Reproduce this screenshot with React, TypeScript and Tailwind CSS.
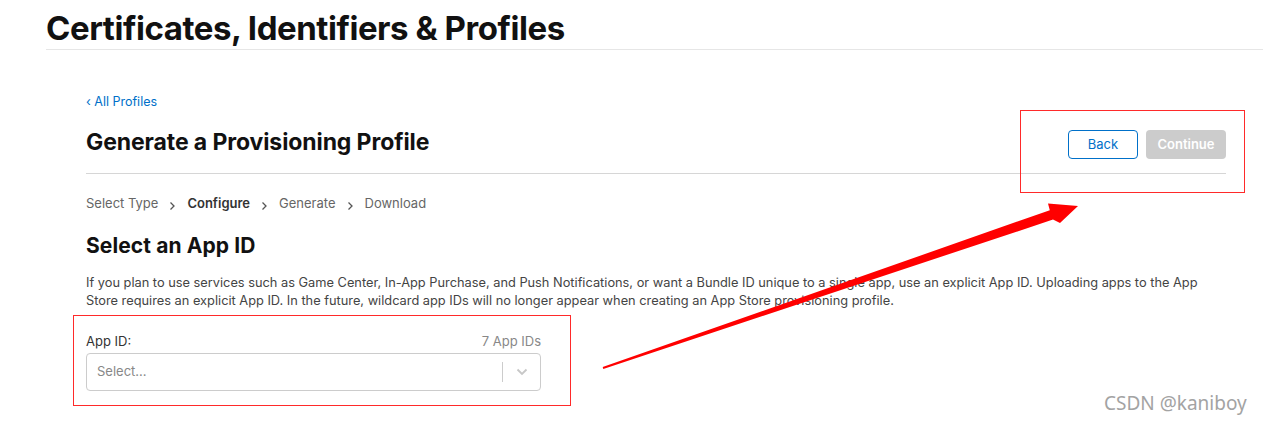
import React from 'react'

const FONT = "font-['Inter','Liberation_Sans',sans-serif]"

const STEPS = [
  { label: 'Select Type', active: false },
  { label: 'Configure', active: true },
  { label: 'Generate', active: false },
  { label: 'Download', active: false },
]

function StepChevron() {
  return (
    <svg className="w-[7px] h-[10px] mt-[5px] text-[#555]" viewBox="0 0 7 10" fill="none" stroke="currentColor" strokeWidth={1.3}>
      <path d="M1.5 1.5 L5 5 L1.5 8.5" />
    </svg>
  )
}

function SelectBox() {
  return (
    <div className="flex items-center h-[38px] border border-[#cccccc] rounded-[4px] bg-white">
      <span className="flex-1 pl-[10px] text-[13px] text-[#888]">Select...</span>
      <span className="w-px h-[20px] bg-[#cccccc]" />
      <span className="w-[37px] flex justify-center">
        <svg className="w-[12px] h-[8px] text-[#c7c7c7]" viewBox="0 0 12 8" fill="none" stroke="currentColor" strokeWidth={1.8}>
          <path d="M1.5 1.5 L6 6 L10.5 1.5" />
        </svg>
      </span>
    </div>
  )
}

// red markup drawn on top of the page
function Markup() {
  return (
    <>
      <div className="absolute left-[1020px] top-[110px] w-[225px] h-[83px] border border-[#ff2a2a] pointer-events-none" />
      <div className="absolute left-[73px] top-[315px] w-[498px] h-[91px] border border-[#ff2a2a] pointer-events-none" />
      <svg className="absolute left-0 top-0 pointer-events-none" width={1263} height={423}>
        <polygon
          fill="#ff0000"
          points="602.7,367.1 1049.8,210.2 1048,203.5 1078,206 1060,223 1053,219.6 603.3,368.9"
        />
      </svg>
      <span className="absolute left-[1104px] top-[389px] text-[19px] text-[#a3a3a3] font-['Noto_Sans',sans-serif] pointer-events-none">
        CSDN @kaniboy
      </span>
    </>
  )
}

export default function App() {
  return (
    <div className={`relative w-[1263px] h-[423px] overflow-hidden bg-white ${FONT}`}>
      <header className="ml-[46px] pt-[9px] pb-[2px] border-b border-[#e6e6e6]">
        <h1 className="text-[33px] leading-[38px] font-bold tracking-[-0.45px] text-[#111]">
          Certificates, Identifiers &amp; Profiles
        </h1>
      </header>

      <main className="ml-[86px] w-[1140px]">
        <a href="#" className="block mt-[44px] text-[12.5px] leading-[16px] text-[#0070c9]">
          ‹ All Profiles
        </a>

        <div className="flex items-start justify-between mt-[17px] pb-[14px] border-b border-[#d6d6d6]">
          <h2 className="text-[23px] leading-[30px] font-bold tracking-[-0.1px] text-[#111]">
            Generate a Provisioning Profile
          </h2>
          <div className="flex gap-[8px] mt-[3px]">
            <button type="button" className="w-[70px] h-[29px] rounded-[4px] border border-[#0070c9] text-[13px] text-[#0070c9] bg-white">
              Back
            </button>
            <button type="button" className="w-[80px] h-[29px] rounded-[4px] bg-[#cccccc] text-[13px] font-semibold text-white">
              Continue
            </button>
          </div>
        </div>

        <nav className="flex items-center gap-[11px] mt-[20px] text-[13px] leading-[18px]">
          {STEPS.map((s, i) => (
            <React.Fragment key={s.label}>
              {i > 0 && <StepChevron />}
              <span className={s.active ? 'font-semibold text-[#333]' : 'text-[#666]'}>{s.label}</span>
            </React.Fragment>
          ))}
        </nav>

        <h3 className="mt-[21px] text-[21px] leading-[26px] font-bold tracking-[0.1px] text-[#111]">Select an App ID</h3>
        <p className="mt-[15px] text-[12.8px] leading-[17.5px] text-[#444] pr-[20px]">
          If you plan to use services such as Game Center, In-App Purchase, and Push Notifications, or want a Bundle ID unique to a single app, use an explicit App ID. Uploading apps to the App Store requires an explicit App ID. In the future, wildcard app IDs will no longer appear when creating an App Store provisioning profile.
        </p>

        <div className="w-[455px] mt-[23px]">
          <div className="flex items-end justify-between mb-[3px]">
            <label className="text-[13px] leading-[18px] text-[#333]">App ID:</label>
            <span className="text-[13px] leading-[18px] text-[#888]">7 App IDs</span>
          </div>
          <SelectBox />
        </div>
      </main>

      <Markup />
    </div>
  )
}
